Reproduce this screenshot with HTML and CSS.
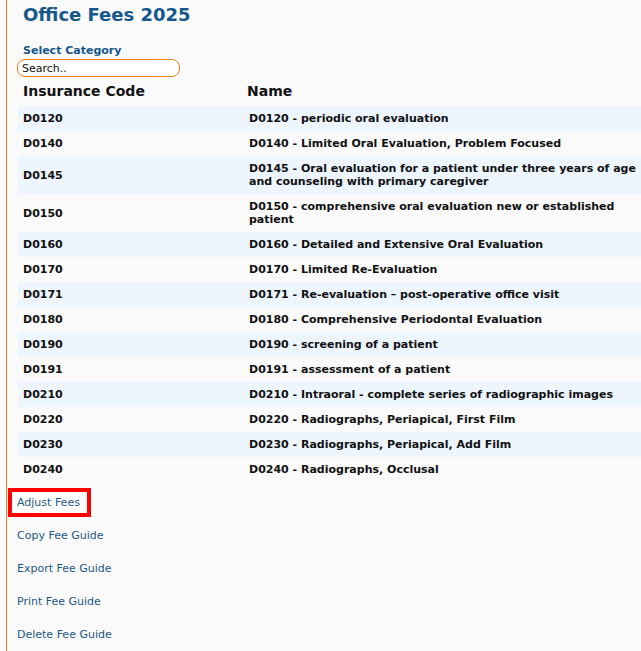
FILE: index.html
```html
<!DOCTYPE html>
<html>
<head>
<meta charset="utf-8">
<link rel="stylesheet" href="styles.css">
</head>
<body>
<div class="page">
  <h1 class="title">Office Fees 2025</h1>
  <div class="label">Select Category</div>
  <input class="search" type="text" value="Search..">
  <table class="fees">
    <thead>
      <tr><th class="c-code">Insurance Code</th><th class="c-name">Name</th></tr>
    </thead>
    <tbody>
      <tr><td>D0120</td><td>D0120 - periodic oral evaluation</td></tr>
      <tr><td>D0140</td><td>D0140 - Limited Oral Evaluation, Problem Focused</td></tr>
      <tr><td>D0145</td><td>D0145 - Oral evaluation for a patient under three years of age and counseling with primary caregiver</td></tr>
      <tr><td>D0150</td><td>D0150 - comprehensive oral evaluation new or established patient</td></tr>
      <tr><td>D0160</td><td>D0160 - Detailed and Extensive Oral Evaluation</td></tr>
      <tr><td>D0170</td><td>D0170 - Limited Re-Evaluation</td></tr>
      <tr><td>D0171</td><td>D0171 - Re-evaluation – post-operative office visit</td></tr>
      <tr><td>D0180</td><td>D0180 - Comprehensive Periodontal Evaluation</td></tr>
      <tr><td>D0190</td><td>D0190 - screening of a patient</td></tr>
      <tr><td>D0191</td><td>D0191 - assessment of a patient</td></tr>
      <tr><td>D0210</td><td>D0210 - Intraoral - complete series of radiographic images</td></tr>
      <tr><td>D0220</td><td>D0220 - Radiographs, Periapical, First Film</td></tr>
      <tr><td>D0230</td><td>D0230 - Radiographs, Periapical, Add Film</td></tr>
      <tr><td>D0240</td><td>D0240 - Radiographs, Occlusal</td></tr>
    </tbody>
  </table>
  <ul class="actions">
    <li><a class="action highlight" href="#">Adjust Fees</a></li>
    <li><a class="action" href="#">Copy Fee Guide</a></li>
    <li><a class="action" href="#">Export Fee Guide</a></li>
    <li><a class="action" href="#">Print Fee Guide</a></li>
    <li><a class="action" href="#">Delete Fee Guide</a></li>
  </ul>
</div>
</body>
</html>
```
FILE: styles.css
```css
html, body {
  margin: 0;
  padding: 0;
  background: #fafafa;
}
body {
  font-family: "DejaVu Sans", Verdana, sans-serif;
  color: #111;
}
.page {
  margin-left: 6px;
  border-left: 1px solid #f07d1e;
  padding-left: 11px;
  min-height: 651px;
  box-sizing: border-box;
  overflow: hidden;
}
.title {
  margin: 0;
  padding: 4px 0 0 5px;
  font-size: 18px;
  line-height: 22px;
  font-weight: bold;
  color: #14578a;
}
.label {
  margin-top: 18px;
  padding-left: 5px;
  font-size: 11px;
  line-height: 13px;
  font-weight: bold;
  color: #14578a;
}
.search {
  display: block;
  margin: 2px 0 0 -1px;
  width: 163px;
  height: 18px;
  box-sizing: border-box;
  border: 1px solid #f07d1e;
  border-radius: 8px;
  padding: 0 4px;
  font-family: "DejaVu Sans", Verdana, sans-serif;
  font-size: 11px;
  color: #111;
  background: #fff;
  outline: none;
}
.fees {
  width: 100%;
  border-collapse: collapse;
  margin-top: 2px;
}
.fees th {
  text-align: left;
  font-size: 14px;
  line-height: 18px;
  font-weight: bold;
  padding: 3px 5px 6px;
  color: #111;
}
.fees th.c-code {
  width: 216px;
}
.fees th.c-name {
  padding-left: 3px;
}
.fees td {
  font-size: 11px;
  line-height: 13px;
  font-weight: bold;
  padding: 6px 5px;
  vertical-align: middle;
  color: #111;
}
.fees tbody tr:nth-child(odd) {
  background: #edf5fe;
}
.actions {
  list-style: none;
  margin: 4px 0 0 -1px;
  padding: 0;
}
.actions li {
  height: 33px;
  display: flex;
  align-items: center;
}
.action {
  font-size: 11px;
  line-height: 13px;
  color: #1d5985;
  text-decoration: none;
}
.highlight {
  display: inline-block;
  margin-left: -5px;
  padding: 4px 7px 4px 5px;
  background: #fff;
  outline: 4px solid #ff0000;
}
```
